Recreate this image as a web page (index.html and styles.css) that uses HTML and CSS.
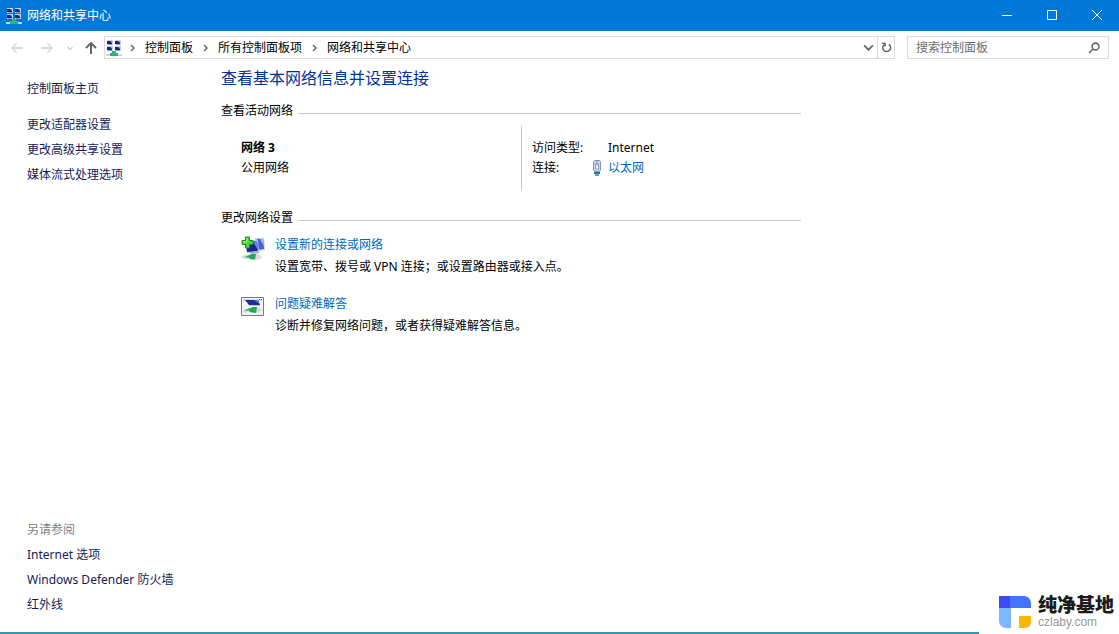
FILE: index.html
```html
<!DOCTYPE html>
<html lang="zh-CN">
<head>
<meta charset="utf-8">
<meta name="viewport" content="width=device-width, initial-scale=1">
<title>网络和共享中心</title>
<link rel="stylesheet" href="styles.css">
</head>
<body>
<svg class="defs" aria-hidden="true">
  <defs>
    <g id="pc">
      <rect x="0" y="0" width="6" height="5" fill="#c3cfea"/>
      <rect x="0" y="1" width="5" height="3" fill="#1c2478"/>
      <path d="M3 1h2v2z" fill="#7d9be6"/>
      <rect x="1" y="4" width="4" height="1" fill="#8e9cc0"/>
    </g>
    <g id="network">
      <use href="#pc" x="1" y="0"/>
      <use href="#pc" x="9" y="0"/>
      <use href="#pc" x="1" y="6"/>
      <use href="#pc" x="9" y="6"/>
      <path d="M6 11h4v2h2v3H4v-3h2z" fill="#2fb277"/>
      <path d="M0 14h4v2H0zM12 14h4v2h-4z" fill="#c9d8d6"/>
    </g>
  </defs>
</svg>
<div class="window">
  <header class="titlebar">
    <svg class="app-icon" viewBox="0 0 16 16" aria-hidden="true"><use href="#network"/></svg>
    <h1 class="window-title">网络和共享中心</h1>
    <div class="window-controls">
      <button class="window-button" aria-label="最小化"><svg viewBox="0 0 10 10"><path d="M0 5.500h10"/></svg></button>
      <button class="window-button" aria-label="最大化"><svg viewBox="0 0 10 10"><path d="M.5.5h9v9h-9z"/></svg></button>
      <button class="window-button" aria-label="关闭"><svg viewBox="0 0 10 10"><path d="M0 0l10 10M10 0L0 10"/></svg></button>
    </div>
  </header>

  <div class="toolbar">
    <nav class="history" aria-label="导航">
      <button class="nav-button back" aria-label="后退"><svg viewBox="0 0 12 12"><path d="M12 6H1M5.500 1.500L1 6l4.500 4.500"/></svg></button>
      <button class="nav-button forward" aria-label="前进"><svg viewBox="0 0 12 12"><path d="M0 6h11M6.500 1.500L11 6l-4.500 4.500"/></svg></button>
      <button class="nav-button recent" aria-label="最近位置"><svg viewBox="0 0 6 6"><path d="M.5 2L3 4.500 5.500 2"/></svg></button>
      <button class="nav-button up" aria-label="向上"><svg viewBox="0 0 12 12"><path d="M6 12V1M1 6l5-5 5 5"/></svg></button>
    </nav>
    <div class="address">
      <svg class="address-icon" viewBox="0 0 16 16" aria-hidden="true"><use href="#network"/></svg>
      <svg class="chevron" viewBox="0 0 5 8" aria-hidden="true"><path d="M1 1l3 3-3 3"/></svg>
      <a class="crumb" href="#">控制面板</a>
      <svg class="chevron" viewBox="0 0 5 8" aria-hidden="true"><path d="M1 1l3 3-3 3"/></svg>
      <a class="crumb" href="#">所有控制面板项</a>
      <svg class="chevron" viewBox="0 0 5 8" aria-hidden="true"><path d="M1 1l3 3-3 3"/></svg>
      <a class="crumb" href="#">网络和共享中心</a>
      <button class="address-button drop" aria-label="以前的位置"><svg viewBox="0 0 10 10"><path d="M1 3l4 4 4-4"/></svg></button>
      <button class="address-button refresh" aria-label="刷新"><svg viewBox="0 0 12 12"><path d="M8.500 2.500A4.300 4.300 0 1 1 3.500 2.800M1 1.500h3.500V5"/></svg></button>
    </div>
    <form class="search">
      <input class="search-input" type="text" placeholder="搜索控制面板" aria-label="搜索控制面板">
      <button class="search-button" type="button" aria-label="搜索"><svg viewBox="0 0 12 12"><circle cx="7.500" cy="4.500" r="3.400"/><path d="M5 7L1 11"/></svg></button>
    </form>
  </div>

  <div class="body">
    <aside class="sidebar">
      <nav class="side-group" aria-label="任务">
        <a class="side-link home" href="#">控制面板主页</a>
        <a class="side-link" href="#">更改适配器设置</a>
        <a class="side-link" href="#">更改高级共享设置</a>
        <a class="side-link" href="#">媒体流式处理选项</a>
      </nav>
      <nav class="side-group" aria-labelledby="see-also">
        <span class="side-label" id="see-also">另请参阅</span>
        <a class="side-link" href="#">Internet 选项</a>
        <a class="side-link" href="#">Windows Defender 防火墙</a>
        <a class="side-link" href="#">红外线</a>
      </nav>
    </aside>

    <main class="content">
      <h2 class="heading">查看基本网络信息并设置连接</h2>
      <section>
        <h3 class="section-title">查看活动网络</h3>
        <div class="active-network">
          <div class="network-name">
            <strong>网络 3</strong>
            <span>公用网络</span>
          </div>
          <dl class="network-info">
            <dt>访问类型:</dt>
            <dd>Internet</dd>
            <dt>连接:</dt>
            <dd>
              <svg class="plug" viewBox="0 0 10 16" aria-hidden="true">
                <path d="M2.500.5h5l1 1V10L7.500 11.500h-5L1.500 10V1.500z" fill="#c9d6e6" stroke="#8296ae"/>
                <path d="M3.500 3.500h3V9h-3z" fill="#f4f7fb" stroke="#8fa3ba"/>
                <path d="M5 1v5" stroke="#8296ae"/>
                <path d="M2 12h6v2H2z" fill="#247b92"/>
                <path d="M3 14h4v2H3z" fill="#5aa9b6"/>
              </svg>
              <a class="link" href="#">以太网</a>
            </dd>
          </dl>
        </div>
      </section>
      <section>
        <h3 class="section-title">更改网络设置</h3>
        <ul class="tasks">
          <li class="task">
            <svg class="task-icon" viewBox="0 0 24 26" aria-hidden="true">
              <path d="M14 2h9l1 12-8 1z" fill="#c5d0ec"/>
              <path d="M16 3h6l1 10-6 1z" fill="#4763cc"/>
              <path d="M19 3h3l.6 7z" fill="#9db6f4"/>
              <path d="M4 5l13-1 1 12-12 1z" fill="#b7c4e8"/>
              <path d="M5 6l11-1 .8 10L6 16z" fill="#1a2498"/>
              <path d="M12 5.400l4-.4.800 9z" fill="#6485e4"/>
              <path d="M9 16l8-1 2 2-9 1z" fill="#a6b0bf"/>
              <path d="M0 20l7-2h10l4 2-1 3-6 1-13-2z" fill="#d5dfde"/>
              <path d="M3 21.500l8-3.500h4l-1 5.500-5-.500-1-1.500z" fill="#20a45b"/>
              <path d="M4.500 1h4v3.500H12v4H8.500V12h-4V8.500H1v-4h3.500z" fill="#50d33b" stroke="#168c1b"/>
              <path d="M6 2v4H2" fill="none" stroke="#a7f48e"/>
            </svg>
            <div class="task-text">
              <a class="link" href="#">设置新的连接或网络</a>
              <p>设置宽带、拨号或 VPN 连接；或设置路由器或接入点。</p>
            </div>
          </li>
          <li class="task">
            <svg class="task-icon" viewBox="0 0 24 26" aria-hidden="true">
              <path d="M.5 2.500h22v18H.5z" fill="#f3f5f5" stroke="#747b80"/>
              <path d="M2 4h19v2H2z" fill="#d5dce5"/>
              <path d="M4 5h13l2 5H8z" fill="#202b9b"/>
              <path d="M13 5h4l1.500 4z" fill="#5876d3"/>
              <path d="M18 4h1v1h-1zM20 4h1v1h-1z" fill="#33434d"/>
              <path d="M8 10h11v1H8z" fill="#b8c3d5"/>
              <path d="M2 15l8-2h9l2 2-2 2-7 1-10-1z" fill="#cfdfd9"/>
              <path d="M3 15.500l9-3.500h4l-1 6-6-1-1-1.500z" fill="#1ba85b"/>
            </svg>
            <div class="task-text">
              <a class="link" href="#">问题疑难解答</a>
              <p>诊断并修复网络问题，或者获得疑难解答信息。</p>
            </div>
          </li>
        </ul>
      </section>
    </main>
  </div>

  <div class="brand">
    <svg class="brand-logo" viewBox="0 0 32 32" aria-hidden="true">
      <path d="M0 0h11v12H0z" fill="#4148f5"/>
      <path d="M11 0h14a7 7 0 0 1 7 7v5H11z" fill="#4175ff"/>
      <path d="M0 12h12v20H7a7 7 0 0 1-7-7z" fill="#7db5ff"/>
      <path d="M20 20h12v6a6 6 0 0 1-6 6h-6z" fill="#ffb400"/>
    </svg>
    <div class="brand-text">
      <span class="brand-name">纯净基地</span>
      <span class="brand-site">czlaby.com</span>
    </div>
  </div>
</div>
</body>
</html>
```

FILE: styles.css
```css
* {
  box-sizing: border-box;
}

body {
  margin: 0;
  background: #fff;
  color: #000;
  font: 12px/20px "Noto Sans", "Noto Sans CJK SC", sans-serif;
}

h1, h2, h3, p, dl, dd, ul {
  margin: 0;
  padding: 0;
  font-size: inherit;
  font-weight: normal;
}

a {
  text-decoration: none;
}

button {
  display: flex;
  align-items: center;
  justify-content: center;
  padding: 0;
  border: 0;
  background: none;
}

svg {
  display: block;
  flex: none;
}

button svg,
.chevron {
  fill: none;
  stroke: currentColor;
}

.defs {
  position: absolute;
  width: 0;
  height: 0;
}

.window {
  position: relative;
  display: flex;
  flex-direction: column;
  min-height: 100vh;
}

.titlebar {
  display: flex;
  align-items: center;
  height: 31px;
  padding-left: 6px;
  background: #0078d7;
  color: #fff;
}

.app-icon,
.address-icon {
  width: 16px;
  height: 16px;
}

.window-title {
  margin-left: 5px;
}

.window-controls {
  display: flex;
  align-self: stretch;
  margin-left: auto;
}

.window-button {
  width: 45px;
  padding-bottom: 1px;
  color: #fff;
}

.window-button svg {
  width: 10px;
  height: 10px;
}

.toolbar {
  display: flex;
  align-items: center;
  padding: 5px 10px 5px 11px;
}

.history {
  display: flex;
  align-items: center;
  width: 93px;
}

.nav-button {
  color: #d0d0d0;
}

.nav-button svg {
  width: 12px;
  height: 12px;
  stroke-width: 1.400;
}

.forward {
  margin-left: 18px;
}

.recent {
  margin-left: 14px;
}

.recent svg {
  width: 6px;
  height: 6px;
}

.up {
  margin-left: 12px;
  color: #666;
}

.up svg {
  stroke-width: 2;
}

.address {
  display: flex;
  flex: 1;
  align-items: center;
  height: 23px;
  padding-left: 1px;
  border: 1px solid #d9d9d9;
}

.chevron {
  width: 5px;
  height: 8px;
  margin: 0 10px;
  color: #666;
  stroke-width: 1.500;
}

.address-icon + .chevron {
  margin-left: 8px;
}

.crumb {
  color: #000;
}

.address-button {
  align-self: stretch;
  width: 17px;
  color: #666;
}

.address-button svg {
  width: 11px;
  height: 11px;
  stroke-width: 1.600;
}

.drop {
  margin-left: auto;
}

.refresh {
  border-left: 1px solid #d9d9d9;
}

.search {
  display: flex;
  width: 202px;
  height: 23px;
  margin-left: 12px;
  border: 1px solid #d9d9d9;
}

.search-input {
  flex: 1;
  min-width: 0;
  padding: 0 0 0 8px;
  border: 0;
  outline: 0;
  background: none;
  font: inherit;
}

.search-input::placeholder {
  color: #6d6d6d;
  opacity: 1;
}

.search-button {
  width: 28px;
  color: #666;
}

.search-button svg {
  width: 12px;
  height: 12px;
  stroke-width: 1.600;
}

.body {
  display: flex;
  flex: 1;
}

.sidebar {
  display: flex;
  flex: none;
  flex-direction: column;
  justify-content: space-between;
  width: 221px;
  padding: 12px 0 17px 27px;
}

.side-group {
  display: flex;
  flex-direction: column;
  align-items: flex-start;
  line-height: 25px;
}

.side-link {
  color: #151c55;
}

.home {
  margin-bottom: 11px;
}

.side-label {
  color: #808080;
}

.content {
  flex: 1;
  max-width: 580px;
  padding-top: 2px;
}

.heading {
  margin-bottom: 11px;
  color: #003399;
  font-size: 16px;
  line-height: 24px;
}

.section-title {
  display: flex;
  align-items: center;
  gap: 5px;
}

.section-title::after {
  content: "";
  flex: 1;
  height: 1px;
  margin-top: 4px;
  background: #c8c8c8;
}

.active-network {
  display: grid;
  grid-template-columns: 300px 1fr;
  margin: 5px 0 18px;
}

.network-name {
  display: flex;
  flex-direction: column;
  padding: 12px 0 12px 20px;
}

.network-info {
  display: grid;
  grid-template-columns: 60px 1fr;
  align-content: start;
  padding: 12px 0 12px 10px;
  border-left: 1px solid #c8c8c8;
}

.network-info dd {
  display: flex;
  align-items: center;
  gap: 6px;
}

.network-info dd:first-of-type {
  padding-left: 16px;
}

.plug {
  width: 10px;
  height: 16px;
}

.link {
  color: #0066bb;
}

.tasks {
  display: flex;
  flex-direction: column;
  gap: 15px;
  padding: 6px 0 0 20px;
  list-style: none;
}

.task {
  display: flex;
  gap: 10px;
  line-height: 22px;
}

.task-icon {
  width: 24px;
  height: 26px;
  margin-top: 2px;
}

.brand {
  position: absolute;
  right: 0;
  bottom: 0;
  left: 0;
  display: flex;
  align-items: flex-end;
  gap: 7px;
  padding-right: 5px;
  pointer-events: none;
}

.brand::before {
  content: "";
  flex: 1;
  height: 2px;
  margin-right: 13px;
  background: #3a8fbb;
}

.brand-logo {
  width: 32px;
  height: 32px;
  margin-bottom: 6px;
}

.brand-text {
  display: flex;
  flex-direction: column;
  margin-bottom: 5px;
}

.brand-name {
  color: #1c1c1c;
  font-size: 19px;
  font-weight: 900;
  line-height: 19px;
}

.brand-site {
  color: #999;
  font: 12px/14px "Liberation Sans", Arial, sans-serif;
}
```
